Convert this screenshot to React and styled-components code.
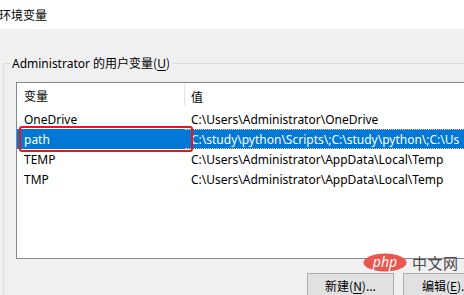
import styled, { createGlobalStyle } from "styled-components";

const GlobalStyle = createGlobalStyle`
  html, body {
    margin: 0;
    padding: 0;
    width: 464px;
    height: 295px;
    overflow: hidden;
    background: #f0f0f0;
    font-family: "Noto Sans", "Noto Sans CJK SC", sans-serif;
    font-size: 12px;
    color: #000;
  }
`;

const Window = styled.div`
  position: relative;
  width: 464px;
  height: 295px;
  overflow: hidden;
`;

const TitleBar = styled.div`
  height: 29px;
  background: #fff;
  display: flex;
  align-items: center;
  margin-left: -1px;
  font-family: "Noto Sans CJK SC", sans-serif;
  font-size: 12px;
  padding-bottom: 1px;
  box-sizing: border-box;
`;

const Body = styled.div`
  padding-top: 26px;
`;

const GroupBox = styled.fieldset`
  margin: 0 0 0 3px;
  padding: 10px 0 0 12px;
  width: 640px;
  border: none;
  border-top: 1px solid #dcdcdc;
  border-left: 1px solid #dcdcdc;
`;

const Legend = styled.legend`
  margin-left: -6px;
  padding: 0 2px;
  line-height: 16px;
`;

const Key = styled.span`
  text-decoration: underline;
  text-underline-offset: 2px;
`;

const ListBox = styled.div`
  position: relative;
  width: 520px;
  height: 175px;
  background: #fff;
  border: 1px solid #828790;
  border-right: none;
`;

const Row = styled.div`
  display: flex;
  align-items: center;
  height: ${(p) => (p.$header ? "26px" : "20px")};
  background: ${(p) => (p.$selected ? "#0078d7" : "transparent")};
  color: ${(p) => (p.$selected ? "#fff" : "#000")};
  white-space: nowrap;
`;

const NameCell = styled.div`
  flex: 0 0 168px;
  padding-left: 7px;
  box-sizing: border-box;
  align-self: stretch;
  display: flex;
  align-items: center;
  border-right: 1px solid ${(p) => (p.$header ? "#e5e5e5" : "transparent")};
  margin: ${(p) => (p.$header ? "1px 0 3px" : "0")};
`;

const ValueCell = styled.div`
  flex: 1;
  min-width: 0;
  overflow: hidden;
  padding-left: 6px;
  align-self: stretch;
  display: flex;
  align-items: center;
  border-top: 1px dotted ${(p) => (p.$selected ? "#f7c77f" : "transparent")};
  border-bottom: 1px dotted ${(p) => (p.$selected ? "#f7c77f" : "transparent")};
`;

const Cjk = styled.span`
  font-family: "Noto Sans CJK SC", sans-serif;
`;

const Highlight = styled.div`
  position: absolute;
  left: 2px;
  top: 43px;
  width: 170px;
  height: 22px;
  border: 2px solid #e8161b;
  border-radius: 3px;
`;

const ButtonRow = styled.div`
  display: flex;
  gap: 9px;
  padding-left: 291px;
  margin-top: 14px;
`;

const Button = styled.button`
  flex: 0 0 87px;
  height: 30px;
  background: #e1e1e1;
  border: 1px solid #adadad;
  font-family: "Noto Sans CJK SC", sans-serif;
  font-size: 12px;
  color: #000;
  padding: 0 0 6px;
  display: flex;
  align-items: center;
  justify-content: center;
  white-space: nowrap;
`;

const Watermark = styled.div`
  position: absolute;
  left: 363px;
  top: 252px;
  display: flex;
  align-items: center;
  gap: 5px;
`;

const WatermarkText = styled.span`
  font-family: "Noto Sans CJK SC", sans-serif;
  font-size: 15px;
  color: #4a4a4a;
  letter-spacing: 0.5px;
`;

const rows = [
  { name: "OneDrive", value: "C:\\Users\\Administrator\\OneDrive" },
  {
    name: "path",
    value: "C:\\study\\python\\Scripts\\;C:\\study\\python\\;C:\\Us",
    selected: true,
  },
  { name: "TEMP", value: "C:\\Users\\Administrator\\AppData\\Local\\Temp" },
  { name: "TMP", value: "C:\\Users\\Administrator\\AppData\\Local\\Temp" },
];

function PhpLogo() {
  return (
    <svg width="44" height="19" viewBox="0 0 44 19">
      <ellipse cx="22" cy="9.5" rx="21.5" ry="9" fill="#e9564f" />
      <text
        x="22"
        y="14"
        textAnchor="middle"
        fill="#fff"
        fontFamily="Noto Sans, sans-serif"
        fontStyle="italic"
        fontSize="14"
      >
        php
      </text>
    </svg>
  );
}

export default function App() {
  return (
    <>
      <GlobalStyle />
      <Window>
        <TitleBar>环境变量</TitleBar>
        <Body>
          <GroupBox>
            <Legend>
              Administrator <Cjk>的用户变量(</Cjk>
              <Key>U</Key>
              <Cjk>)</Cjk>
            </Legend>
            <ListBox>
              <Row $header>
                <NameCell $header>
                  <Cjk>变量</Cjk>
                </NameCell>
                <ValueCell>
                  <Cjk>值</Cjk>
                </ValueCell>
              </Row>
              {rows.map((r) => (
                <Row key={r.name} $selected={r.selected}>
                  <NameCell>{r.name}</NameCell>
                  <ValueCell $selected={r.selected}>{r.value}</ValueCell>
                </Row>
              ))}
              <Highlight />
            </ListBox>
            <ButtonRow>
              <Button>
                新建(<Key>N</Key>)...
              </Button>
              <Button>
                编辑(<Key>E</Key>)...
              </Button>
            </ButtonRow>
          </GroupBox>
        </Body>
        <Watermark>
          <PhpLogo />
          <WatermarkText>中文网</WatermarkText>
        </Watermark>
      </Window>
    </>
  );
}
